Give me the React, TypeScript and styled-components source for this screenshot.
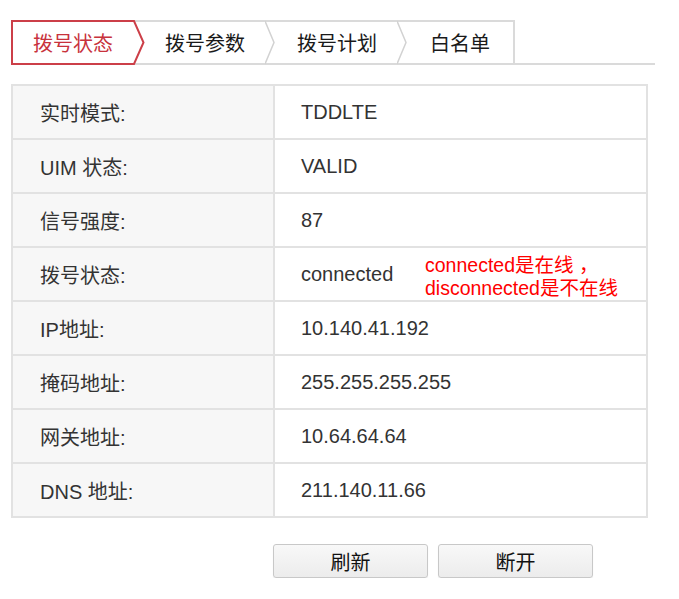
import React from "react";
import styled, { createGlobalStyle } from "styled-components";

const GlobalStyle = createGlobalStyle`
  body {
    margin: 0;
    background: #fff;
    font-family: "Liberation Sans", "Noto Sans CJK SC", sans-serif;
  }
`;

const Page = styled.div`
  padding: 20px 0 0 11px;
`;

const TabBar = styled.div`
  display: flex;
  width: 644px;
  height: 45px;
`;

const Tab = styled.div<{ $active?: boolean; $last?: boolean }>`
  box-sizing: border-box;
  display: flex;
  align-items: center;
  padding: ${({ $last }) => ($last ? "0 23px 0 21px" : "0 20px")};
  font-size: 20px;
  color: ${({ $active }) => ($active ? "#c8323c" : "#1a1a1a")};
  border-top: 2px solid ${({ $active }) => ($active ? "#cc3f48" : "#dadada")};
  border-bottom: 2px solid ${({ $active }) => ($active ? "#cc3f48" : "#dadada")};
  border-left: ${({ $active }) => ($active ? "2px solid #cc3f48" : "none")};
  border-right: ${({ $last }) => ($last ? "2px solid #dadada" : "none")};
`;

const Filler = styled.div`
  flex: 1;
  border-bottom: 2px solid #dadada;
`;

const Chevron = ({ active }: { active?: boolean }) => (
  <svg width="12" height="45" viewBox="0 0 12 45" style={{ flexShrink: 0 }}>
    <path d="M0 1H12M0 44H12" stroke="#dadada" strokeWidth="2" fill="none" />
    {active ? (
      <path d="M0 1H1L10.5 22.5L1 44H0" stroke="#cc3f48" strokeWidth="2" fill="#fff" />
    ) : (
      <path d="M0 1L9 22.5L0 44" stroke="#d2d2d2" strokeWidth="1.5" fill="none" />
    )}
  </svg>
);

const Table = styled.div`
  box-sizing: border-box;
  margin-top: 19px;
  width: 637px;
  border: 2px solid #e2e2e2;
`;

const Row = styled.div`
  display: grid;
  grid-template-columns: 262px 1fr;
  height: 52px;
  & + & {
    border-top: 2px solid #e2e2e2;
  }
`;

const Label = styled.div`
  box-sizing: border-box;
  display: flex;
  align-items: center;
  padding-left: 27px;
  background: #f7f7f7;
  border-right: 2px solid #e2e2e2;
  font-size: 20px;
  color: #333;
`;

const Value = styled.div`
  display: flex;
  align-items: center;
  padding-left: 26px;
  font-size: 20px;
  color: #333;
`;

const ValueText = styled.span`
  width: 124px;
  flex-shrink: 0;
`;

const Note = styled.div`
  color: #ff0000;
  font-size: 19.5px;
  line-height: 23px;
  margin-top: 6px;
  white-space: nowrap;
`;

const Actions = styled.div`
  display: flex;
  gap: 10px;
  margin: 26px 0 0 262px;
`;

const Button = styled.button`
  width: 155px;
  height: 34px;
  background: linear-gradient(#f8f8f8, #ececec);
  border: 1px solid #c8c8c8;
  border-radius: 3px;
  box-shadow: 0 1px 1px rgba(0, 0, 0, 0.08);
  font-family: "Liberation Sans", "Noto Sans CJK SC", sans-serif;
  font-size: 20px;
  color: #111;
  cursor: pointer;
`;

const tabs = ["拨号状态", "拨号参数", "拨号计划", "白名单"];

const rows: [string, string][] = [
  ["实时模式:", "TDDLTE"],
  ["UIM 状态:", "VALID"],
  ["信号强度:", "87"],
  ["拨号状态:", "connected"],
  ["IP地址:", "10.140.41.192"],
  ["掩码地址:", "255.255.255.255"],
  ["网关地址:", "10.64.64.64"],
  ["DNS 地址:", "211.140.11.66"],
];

export default function App() {
  return (
    <>
      <GlobalStyle />
      <Page>
        <TabBar>
          {tabs.map((t, i) => (
            <React.Fragment key={t}>
              <Tab $active={i === 0} $last={i === tabs.length - 1}>
                {t}
              </Tab>
              {i < tabs.length - 1 && <Chevron active={i === 0} />}
            </React.Fragment>
          ))}
          <Filler />
        </TabBar>
        <Table>
          {rows.map(([k, v]) => (
            <Row key={k}>
              <Label>{k}</Label>
              <Value>
                {v === "connected" ? (
                  <>
                    <ValueText>{v}</ValueText>
                    <Note>
                      connected是在线 ，
                      <br />
                      disconnected是不在线
                    </Note>
                  </>
                ) : (
                  v
                )}
              </Value>
            </Row>
          ))}
        </Table>
        <Actions>
          <Button>刷新</Button>
          <Button>断开</Button>
        </Actions>
      </Page>
    </>
  );
}
